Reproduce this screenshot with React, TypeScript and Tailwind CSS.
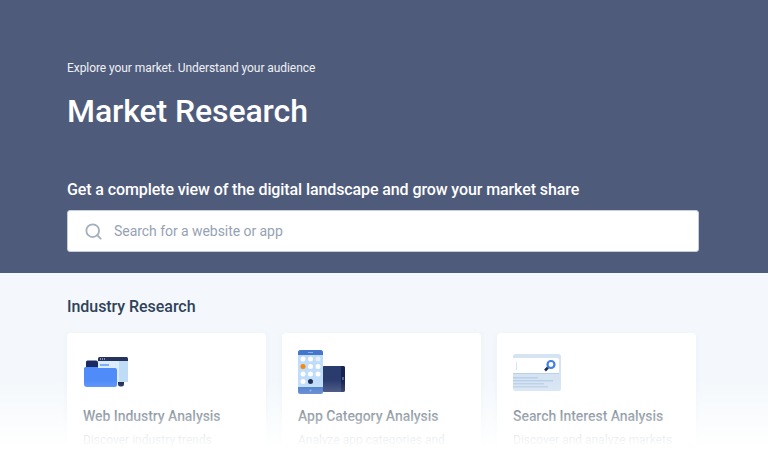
import { Search } from "lucide-react";

function FolderIcon() {
  return (
    <svg className="ml-[1px]" width="44" height="30" viewBox="0 0 44 30" fill="none">
      <path d="M14 1.500A1.500 1.500 0 0 1 15.500 0h27A1.500 1.500 0 0 1 44 1.500V4H14z" fill="#26335f" />
      <rect x="16" y="1.500" width="1" height="1" fill="#dcecfb" />
      <rect x="18" y="1.500" width="1" height="1" fill="#dcecfb" />
      <rect x="20" y="1.500" width="1" height="1" fill="#dcecfb" />
      <rect x="14" y="4" width="30" height="21" fill="#dcecfb" />
      <rect x="35" y="4" width="9" height="21" fill="#bfdcf7" />
      <rect x="16" y="7" width="9" height="2" fill="#7fb0f5" />
      <path d="M2 5A1.500 1.500 0 0 1 3.500 3.500H12a2 2 0 0 1 2 2V11H2z" fill="#1b2a63" />
      <path d="M0 11.500A1.500 1.500 0 0 1 1.500 10H14v1h17a2 2 0 0 1 2 2v15a2 2 0 0 1-2 2H3a3 3 0 0 1-3-3z" fill="#4f8bf9" />
      <path d="M34 25h6v2a2.500 2.500 0 0 1-2.500 2.500h-1A2.500 2.500 0 0 1 34 27z" fill="#1b2a50" />
    </svg>
  );
}

function PhoneIcon() {
  return (
    <svg width="48" height="45" viewBox="0 0 48 45" fill="none">
      <rect x="24" y="16" width="23" height="26" rx="2" fill="#2a3b6e" />
      <path d="M43 16h2a2 2 0 0 1 2 2v22a2 2 0 0 1-2 2h-2z" fill="#16234e" />
      <rect x="44.500" y="27" width="1" height="3" fill="#8fa3c7" />
      <rect x="0" y="0" width="25" height="44" rx="2.500" fill="#bfdcfb" />
      <path d="M0 5V2.500A2.500 2.500 0 0 1 2.500 0h20A2.500 2.500 0 0 1 25 2.500V5z" fill="#4576c9" />
      <path d="M0 37h25v4.500a2.500 2.500 0 0 1-2.500 2.500h-20A2.500 2.500 0 0 1 0 41.500z" fill="#4576c9" />
      <rect x="10" y="2" width="5" height="1" fill="#7fb0f5" />
      <circle cx="12.500" cy="40.500" r="1" fill="#7fb0f5" />
      <circle cx="5" cy="9" r="2.500" fill="#fff" />
      <circle cx="12.500" cy="9" r="2.500" fill="#fff" />
      <circle cx="20" cy="9" r="2.500" fill="#e3f0fd" />
      <circle cx="5" cy="16.500" r="2.500" fill="#f5890b" />
      <circle cx="12.500" cy="16.500" r="2.500" fill="#fff" />
      <circle cx="20" cy="16.500" r="2.500" fill="#fff" />
      <circle cx="5" cy="24" r="2.500" fill="#fff" />
      <circle cx="12.500" cy="24" r="2.500" fill="#fff" />
      <circle cx="20" cy="24" r="2.500" fill="#fff" />
      <circle cx="5" cy="31.500" r="2.500" fill="#fff" />
      <circle cx="12.500" cy="31.500" r="2.500" fill="#1b2a50" />
    </svg>
  );
}

function SearchCardIcon() {
  return (
    <svg width="48" height="37" viewBox="0 0 48 37" fill="none">
      <rect width="48" height="37" rx="2.500" fill="#d5e3f3" />
      <path d="M0 4h44a2 2 0 0 1 2 2v13H0z" fill="#fff" />
      <rect x="3" y="8" width="1" height="8" fill="#d5e3f3" />
      <rect y="19" width="46" height="1" fill="#b9d0e8" />
      <rect y="23" width="25" height="1.500" fill="#b9d0e8" />
      <rect y="26" width="40" height="1.500" fill="#b9d0e8" />
      <rect y="29" width="31" height="1.500" fill="#b9d0e8" />
      <rect y="32" width="35" height="1.500" fill="#b9d0e8" />
      <path d="M35 13.500l-3 3" stroke="#1b2a50" strokeWidth="2.500" />
      <circle cx="38" cy="10.500" r="3.500" stroke="#3f7fe8" strokeWidth="2.200" />
    </svg>
  );
}

const cards = [
  { icon: <FolderIcon />, title: "Web Industry Analysis", text: "Discover industry trends" },
  { icon: <PhoneIcon />, title: "App Category Analysis", text: "Analyze app categories and" },
  { icon: <SearchCardIcon />, title: "Search Interest Analysis", text: "Discover and analyze markets" },
];

export default function App() {
  return (
    <div className="relative h-[456px] w-[768px] overflow-hidden bg-[#f4f8fc] font-['Roboto',sans-serif]">
      <header className="h-[273px] bg-[#4f5b7b] px-[67px] pt-[61px] text-white">
        <p className="text-[12px] leading-[15px] tracking-[-0.07px] text-[#eef1f6]">Explore your market. Understand your audience</p>
        <h1 className="mt-[16px] text-[32px] leading-[38px] font-medium tracking-[-0.1px]">Market Research</h1>
        <h2 className="mt-[50px] text-[16px] leading-[20px] font-medium tracking-[-0.1px]">
          Get a complete view of the digital landscape and grow your market share
        </h2>
        <div className="mt-[10px] flex h-[42px] w-[632px] items-center gap-[11px] rounded-[3px] border border-[#c5cedb] bg-white pl-[16px]">
          <Search className="h-[19px] w-[19px] text-[#a3afbf]" strokeWidth={2.25} />
          <span className="text-[14px] tracking-[-0.05px] text-[#96a2b4]">Search for a website or app</span>
        </div>
      </header>

      <main className="px-[67px] pt-[24px]">
        <h3 className="text-[16px] leading-[19px] font-medium tracking-[-0.05px] text-[#2f4258]">Industry Research</h3>
        <div className="mt-[17px] grid w-[629px] grid-cols-3 gap-[16px]">
          {cards.map((card) => (
            <div key={card.title} className="h-[180px] rounded-[4px] bg-white px-[16px] pt-[16px] shadow-[0_1px_6px_rgba(120,150,190,0.08)]">
              <div className="flex h-[46px] items-center">{card.icon}</div>
              <h4 className="mt-[13px] text-[14px] leading-[17px] font-medium tracking-[-0.05px] whitespace-nowrap text-[#2a3e52]">{card.title}</h4>
              <p className="mt-[7px] text-[12px] leading-[17px] whitespace-nowrap text-[#8796a8]">{card.text}</p>
            </div>
          ))}
        </div>
      </main>

      {/* bottom fade over the cards */}
      <div className="absolute inset-x-0 bottom-0 h-[76px] bg-gradient-to-b from-white/0 to-white to-90%" />
    </div>
  );
}
